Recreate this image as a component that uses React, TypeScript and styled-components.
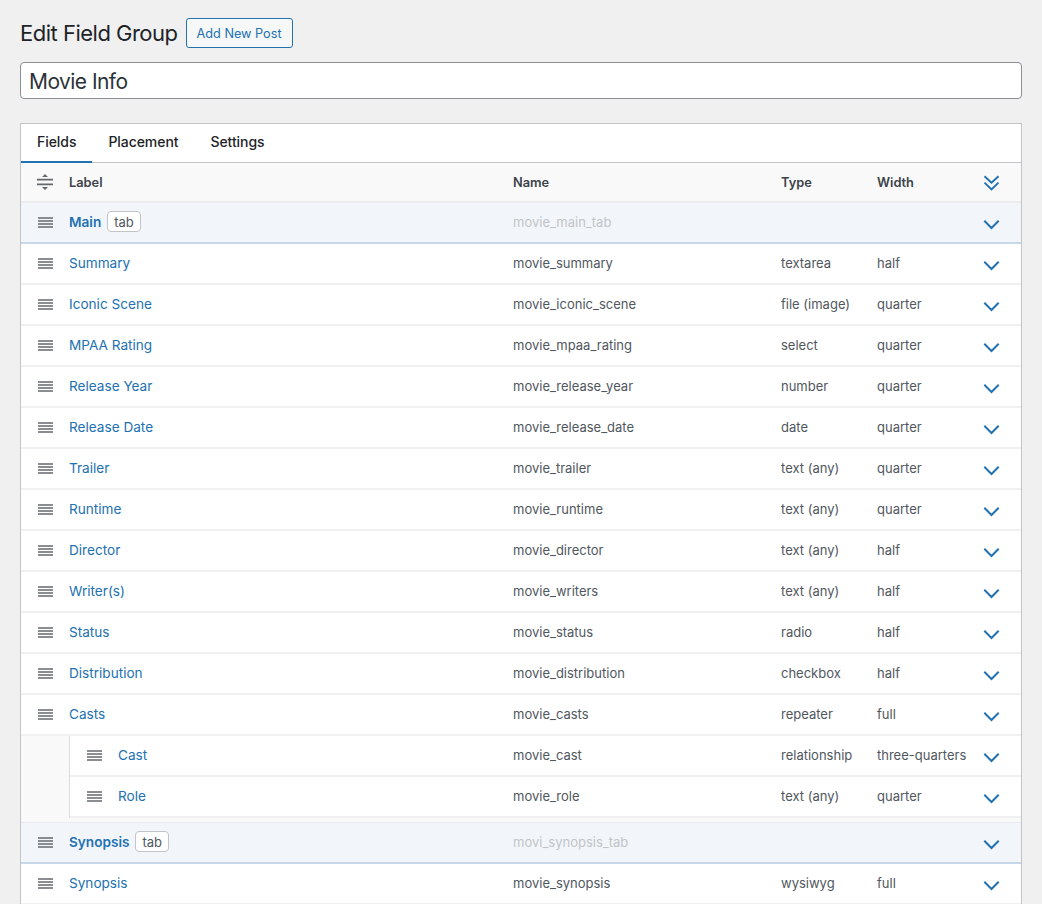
import React from "react";
import styled, { createGlobalStyle } from "styled-components";

const Global = createGlobalStyle`
  html, body { margin: 0; padding: 0; height: 904px; overflow: hidden; background: #f0f0f1; }
  body { font-family: Inter, "Liberation Sans", sans-serif; color: #3c434a; }
  * { box-sizing: border-box; }
`;

const Page = styled.div`
  padding: 18px 20px 0;
`;
const Head = styled.div`
  display: flex;
  align-items: center;
  gap: 8px;
  height: 30px;
`;
const Title = styled.h1`
  margin: 0;
  font-size: 22px;
  font-weight: 400;
  color: #1d2327;
  letter-spacing: -0.5px;
`;
const AddButton = styled.button`
  height: 30px;
  width: 107px;
  padding: 0;
  font: 400 12.7px Inter, sans-serif;
  color: #2271b1;
  background: #f6f7f7;
  border: 1px solid #2271b1;
  border-radius: 3px;
`;
const TitleInput = styled.div`
  margin-top: 14px;
  height: 37px;
  padding: 1px 8px 0;
  display: flex;
  align-items: center;
  font-size: 21px;
  letter-spacing: -0.55px;
  color: #2c3338;
  background: #fff;
  border: 1px solid #8c8f94;
  border-radius: 4px;
`;
const Box = styled.div`
  margin-top: 24px;
  background: #fff;
  border: 1px solid #c3c4c7;
`;
const Tabs = styled.div`
  display: flex;
  height: 39px;
  border-bottom: 1px solid #c3c4c7;
`;
const Tab = styled.div<{ $active?: boolean }>`
  display: flex;
  align-items: center;
  padding: 0 16px 2px;
  font-size: 14px;
  font-weight: 500;
  letter-spacing: -0.06px;
  color: #1d2327;
  margin-bottom: -1px;
  border-bottom: 2px solid ${(p) => (p.$active ? "#2271b1" : "transparent")};
`;
const columns = (nested?: boolean) =>
  `${nested ? "48px 395px" : "48px 444px"} 268px 96px 1fr 40px`;
const HeaderRow = styled.div`
  display: grid;
  grid-template-columns: ${columns()};
  align-items: center;
  height: 40px;
  padding-right: 10px;
  font-size: 12.8px;
  font-weight: 600;
  color: #3c434a;
  background: #f9f9f9;
  border-bottom: 2px solid #eaecef;
`;
const Row = styled.div<{ $tab?: boolean; $nested?: boolean }>`
  display: grid;
  grid-template-columns: ${(p) => columns(p.$nested)};
  align-items: center;
  height: 41px;
  padding: 0 10px 2px 0;
  font-size: 13px;
  background: ${(p) => (p.$tab ? "#f2f6fb" : "#fff")};
  border-bottom: 2px solid ${(p) => (p.$tab ? "#c5d7e8" : "#f0f0f1")};
`;
const HandleCell = styled.div<{ $offset?: number }>`
  display: flex;
  justify-content: center;
  padding-top: ${(p) => p.$offset ?? 0}px;
`;
const LabelCell = styled.div<{ $tab?: boolean }>`
  display: flex;
  align-items: center;
  gap: 6px;
  font-size: 13.6px;
  font-weight: ${(p) => (p.$tab ? 600 : 400)};
  color: #2271b1;
`;
const Tag = styled.span`
  display: inline-flex;
  align-items: center;
  justify-content: center;
  height: 21px;
  padding: 0 6px;
  font-size: 13px;
  font-weight: 400;
  color: #50575e;
  background: #fff;
  border: 1px solid #c3c4c7;
  border-radius: 4px;
`;
const NameCell = styled.div<{ $faded?: boolean }>`
  color: ${(p) => (p.$faded ? "#c3c4c7" : "#50575e")};
`;
const PlainCell = styled.div`
  color: #50575e;
`;
const ToggleCell = styled.div<{ $offset?: number }>`
  display: flex;
  justify-content: center;
  padding-top: ${(p) => p.$offset ?? 0}px;
`;
const SubGroup = styled.div`
  padding-left: 48px;
  padding-bottom: 4px;
  background: #f9f9f9;
  border-bottom: 1px solid #ececee;
`;
const SubList = styled.div`
  border-left: 1px solid #dcdcde;
`;

const Handle = () => (
  <svg width="15" height="11" viewBox="0 0 15 11" aria-hidden="true">
    <path d="M0 1h15M0 4h15M0 7h15M0 10h15" stroke="#646970" strokeWidth="1.6" fill="none" />
  </svg>
);
const SortIcon = () => (
  <svg width="18" height="18" viewBox="0 0 18 18" aria-hidden="true">
    <path d="M1 6.6h16M1 11.4h16" stroke="#646970" strokeWidth="1.6" fill="none" />
    <path d="M9 1L12 4H6zM9 17L6 14h6z" fill="#646970" />
  </svg>
);
const Chevron = () => (
  <svg width="17" height="11" viewBox="0 0 17 11" aria-hidden="true">
    <path d="M1.3 1.7L8.5 9l7.2-7.3" stroke="#2271b1" strokeWidth="2" fill="none" />
  </svg>
);
const DoubleChevron = () => (
  <svg width="17" height="16" viewBox="0 0 17 16" aria-hidden="true">
    <path d="M1.5 1.3L8.5 7.6l7-6.3M1.5 7.6l7 6.8 7-6.8" stroke="#2271b1" strokeWidth="1.9" fill="none" />
  </svg>
);

type Field = { label: string; name: string; type?: string; width?: string };
const first: Field[] = [
  { label: "Summary", name: "movie_summary", type: "textarea", width: "half" },
  { label: "Iconic Scene", name: "movie_iconic_scene", type: "file (image)", width: "quarter" },
  { label: "MPAA Rating", name: "movie_mpaa_rating", type: "select", width: "quarter" },
  { label: "Release Year", name: "movie_release_year", type: "number", width: "quarter" },
  { label: "Release Date", name: "movie_release_date", type: "date", width: "quarter" },
  { label: "Trailer", name: "movie_trailer", type: "text (any)", width: "quarter" },
  { label: "Runtime", name: "movie_runtime", type: "text (any)", width: "quarter" },
  { label: "Director", name: "movie_director", type: "text (any)", width: "half" },
  { label: "Writer(s)", name: "movie_writers", type: "text (any)", width: "half" },
  { label: "Status", name: "movie_status", type: "radio", width: "half" },
  { label: "Distribution", name: "movie_distribution", type: "checkbox", width: "half" },
  { label: "Casts", name: "movie_casts", type: "repeater", width: "full" },
];
const nested: Field[] = [
  { label: "Cast", name: "movie_cast", type: "relationship", width: "three-quarters" },
  { label: "Role", name: "movie_role", type: "text (any)", width: "quarter" },
];

const FieldRow = ({ f, tab, inner }: { f: Field; tab?: boolean; inner?: boolean }) => (
  <Row $tab={tab} $nested={inner}>
    <HandleCell $offset={2}><Handle /></HandleCell>
    <LabelCell $tab={tab}>
      {f.label}
      {tab && <Tag>tab</Tag>}
    </LabelCell>
    <NameCell $faded={tab}>{f.name}</NameCell>
    <PlainCell>{f.type}</PlainCell>
    <PlainCell>{f.width}</PlainCell>
    <ToggleCell $offset={6}><Chevron /></ToggleCell>
  </Row>
);

export default function App() {
  return (
    <Page>
      <Global />
      <Head>
        <Title>Edit Field Group</Title>
        <AddButton>Add New Post</AddButton>
      </Head>
      <TitleInput>Movie Info</TitleInput>
      <Box>
        <Tabs>
          <Tab $active>Fields</Tab>
          <Tab>Placement</Tab>
          <Tab>Settings</Tab>
        </Tabs>
        <HeaderRow>
          <HandleCell><SortIcon /></HandleCell>
          <div>Label</div>
          <div>Name</div>
          <div>Type</div>
          <div>Width</div>
          <ToggleCell $offset={1}><DoubleChevron /></ToggleCell>
        </HeaderRow>
        <FieldRow tab f={{ label: "Main", name: "movie_main_tab" }} />
        {first.map((f) => <FieldRow key={f.name} f={f} />)}
        <SubGroup>
          <SubList>
            {nested.map((f) => <FieldRow key={f.name} f={f} inner />)}
          </SubList>
        </SubGroup>
        <FieldRow tab f={{ label: "Synopsis", name: "movi_synopsis_tab" }} />
        <FieldRow f={{ label: "Synopsis", name: "movie_synopsis", type: "wysiwyg", width: "full" }} />
      </Box>
    </Page>
  );
}
